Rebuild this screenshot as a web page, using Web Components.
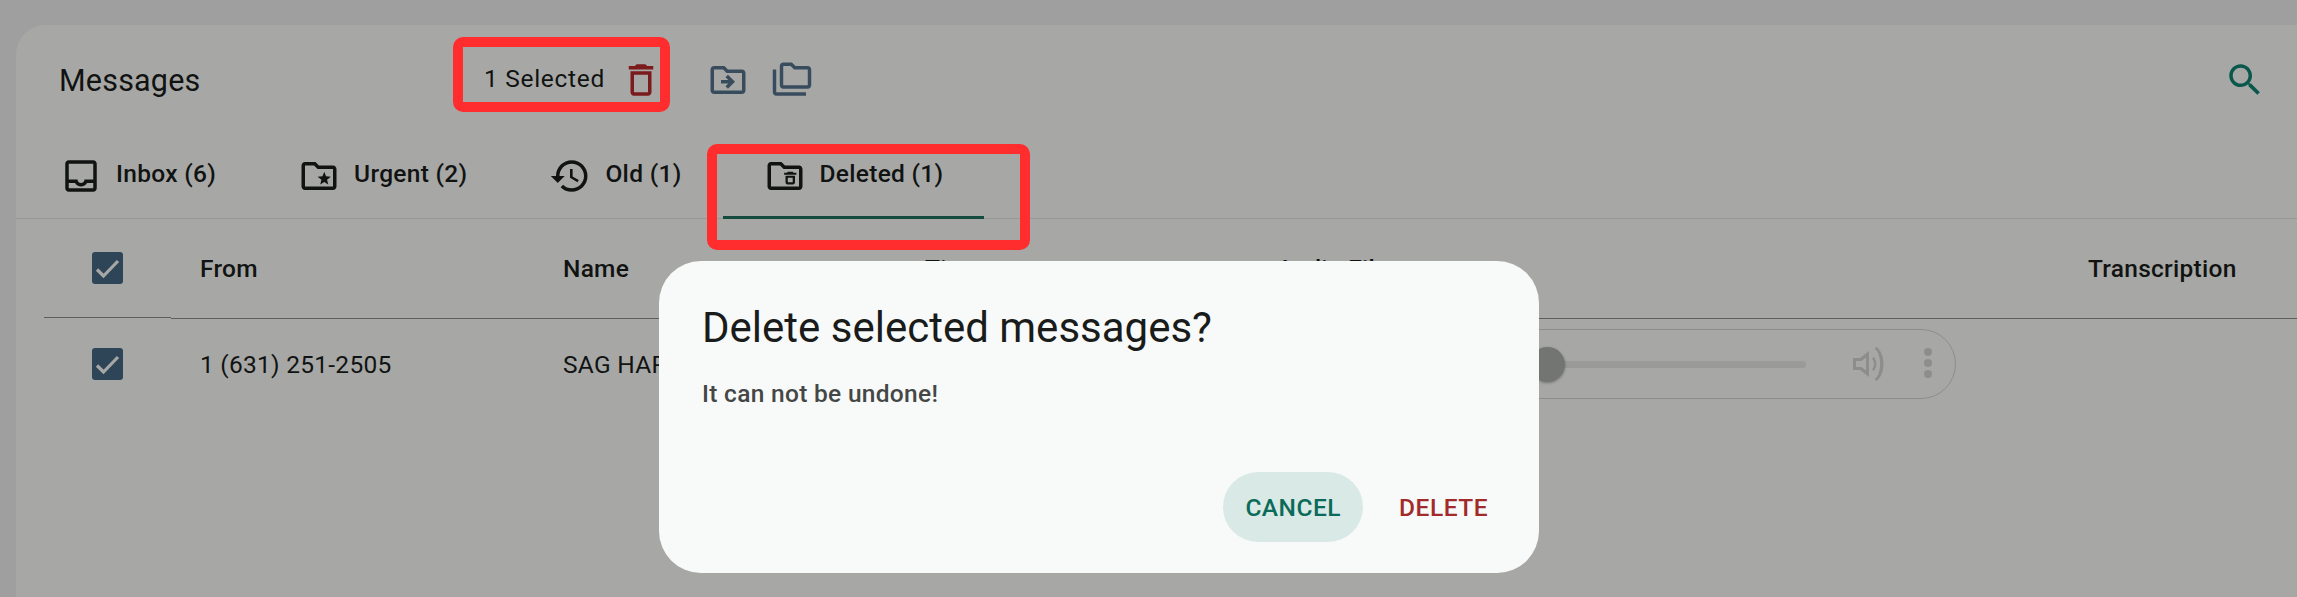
<!DOCTYPE html>
<html lang="en">
<head>
<meta charset="utf-8">
<title>Messages</title>
<style>
  html, body { margin: 0; height: 100%; }
  body {
    background: #ebebeb;
    font-family: Roboto, "Liberation Sans", sans-serif;
    color: #1a1c1b;
    overflow: hidden;
  }
</style>
</head>
<body>
  <message-card>
    <message-toolbar title="Messages" selected="1 Selected"></message-toolbar>
    <message-tabs>
      <message-tab icon="inbox">Inbox (6)</message-tab>
      <message-tab icon="urgent">Urgent (2)</message-tab>
      <message-tab icon="history">Old (1)</message-tab>
      <message-tab icon="deleted" active>Deleted (1)</message-tab>
    </message-tabs>
    <message-table></message-table>
  </message-card>

  <confirm-dialog title="Delete selected messages?" text="It can not be undone!"></confirm-dialog>

  <mark-box style="left:453px;top:37px;width:217px;height:75px"></mark-box>
  <mark-box style="left:707px;top:144px;width:323px;height:106px"></mark-box>

<script>
// material outlined icons, all on a 24 grid
const ICONS = {
  inbox: 'M19 3H5c-1.1 0-2 .9-2 2v14c0 1.1.9 2 2 2h14c1.1 0 2-.9 2-2V5c0-1.1-.9-2-2-2zm0 16H5v-3h3.56c.69 1.19 1.97 2 3.45 2s2.75-.81 3.45-2H19v3zm0-5h-4.99c0 1.1-.9 2-2 2s-2-.9-2-2H5V5h14v9z',
  urgent: 'M20 6h-8l-2-2H4c-1.1 0-1.99.9-1.99 2L2 18c0 1.1.9 2 2 2h16c1.1 0 2-.9 2-2V8c0-1.1-.9-2-2-2zm0 12H4V6h5.17l2 2H20v10zM15 9.6l1 2.6 2.8.2-2.2 1.8.7 2.7-2.3-1.5-2.3 1.5.7-2.7-2.2-1.8 2.8-.2z',
  history: 'M13 3c-4.97 0-9 4.03-9 9H1l3.89 3.89.07.14L9 12H6c0-3.87 3.13-7 7-7s7 3.13 7 7-3.13 7-7 7c-1.93 0-3.68-.79-4.94-2.06l-1.42 1.42C8.27 19.99 10.51 21 13 21c4.97 0 9-4.03 9-9s-4.03-9-9-9zm-1 5v5l4.28 2.54.72-1.21-3.5-2.08V8H12z',
  deleted: 'M20 6h-8l-2-2H4c-1.1 0-1.99.9-1.99 2L2 18c0 1.1.9 2 2 2h16c1.1 0 2-.9 2-2V8c0-1.1-.9-2-2-2zm0 12H4V6h5.17l2 2H20v10zM13.6 9.5h2.8l.5.6H18.500v1.200h-7V10.100h1.600zM12.300 11.800h5.400v3.900c0 .6-.5 1.100-1.100 1.100h-3.200c-.6 0-1.100-.5-1.100-1.100zm1.300 1.200v2.600h2.800V13z',
  trash: 'M16 9v10H8V9h8m-1.500-6h-5l-1 1H5v2h14V4h-3.500l-1-1zM18 7H6v12c0 1.100.9 2 2 2h8c1.100 0 2-.9 2-2V7z',
  move: 'M20 6h-8l-2-2H4c-1.100 0-1.990.9-1.990 2L2 18c0 1.100.9 2 2 2h16c1.100 0 2-.9 2-2V8c0-1.100-.9-2-2-2zm0 12H4V6h5.170l2 2H20v10zm-8.010-9l-1.410 1.410L12.160 12H8v2h4.160l-1.590 1.590L11.990 17 16 13.010 11.990 9z',
  copy: 'M3 19h17v2H3c-1.100 0-2-.9-2-2V6h2v13zM23 6v9c0 1.100-.9 2-2 2H7c-1.100 0-2-.9-2-2l.01-11c0-1.100.89-2 1.990-2h5l2 2h7c1.100 0 2 .9 2 2zM7 15h14V6h-7.830l-2-2H7v11z',
  search: 'M15.500 14h-.79l-.28-.27C15.410 12.590 16 11.110 16 9.500 16 5.910 13.090 3 9.500 3S3 5.910 3 9.500 5.910 16 9.500 16c1.610 0 3.090-.59 4.230-1.570l.27.28v.79l5 4.990L20.490 19l-4.990-5zm-6 0C7.010 14 5 11.990 5 9.500S7.010 5 9.500 5 14 7.010 14 9.500 11.990 14 9.500 14z'
}

class AppIcon extends HTMLElement {
  constructor() {
    super();
    this.attachShadow({ mode: 'open' });
    const name = this.getAttribute('name');
    this.shadowRoot.innerHTML = `
      <style>
        :host { display: block; width: 42px; height: 42px; flex: none; }
        svg { display: block; width: 100%; height: 100%; fill: currentColor; }
      </style>
      <svg viewBox="0 0 24 24"><path d="${ICONS[name]}"></path></svg>
    `;
  }
}

class MessageCard extends HTMLElement {
  constructor() {
    super();
    this.attachShadow({ mode: 'open' });
    this.shadowRoot.innerHTML = `
      <style>
        :host {
          display: block;
          height: 572px;
          margin: 25px 0 0 16px;
          background: #f6f8f4;
          border-radius: 30px 0 0 0;
        }
      </style>
      <slot></slot>
    `;
  }
}

class MessageToolbar extends HTMLElement {
  constructor() {
    super();
    this.attachShadow({ mode: 'open' });
    this.shadowRoot.innerHTML = `
      <style>
        :host {
          display: flex;
          align-items: center;
          height: 110px;
          padding-left: 43px;
          padding-right: 31px;
        }
        .title { width: 425px; flex: none; font-size: 30.500px; letter-spacing: .2px; color: #1a1c1b; }
        .selected { width: 136px; flex: none; font-size: 24.500px; letter-spacing: .7px; color: #1a1c1b; margin-top: -4px; }
        .trash { color: #b52828; margin-right: 45px; }
        .move { color: #55708a; margin-right: 22px; }
        .copy { color: #55708a; }
        .search { color: #0f8070; margin-left: auto; }
      </style>
      <div class="title">${this.getAttribute('title')}</div>
      <div class="selected">${this.getAttribute('selected')}</div>
      <app-icon class="trash" name="trash"></app-icon>
      <app-icon class="move" name="move"></app-icon>
      <app-icon class="copy" name="copy"></app-icon>
      <app-icon class="search" name="search"></app-icon>
    `;
  }
}

class MessageTabs extends HTMLElement {
  constructor() {
    super();
    this.attachShadow({ mode: 'open' });
    this.shadowRoot.innerHTML = `
      <style>
        :host {
          display: flex;
          height: 84px;
          box-sizing: border-box;
          padding-left: 3px;
          border-bottom: 1px solid #dfe1de;
        }
      </style>
      <slot></slot>
    `;
  }
}

class MessageTab extends HTMLElement {
  constructor() {
    super();
    this.attachShadow({ mode: 'open' });
    this.shadowRoot.innerHTML = `
      <style>
        :host {
          display: flex;
          align-items: center;
          gap: 14px;
          height: 84px;
          box-sizing: border-box;
          padding: 0 41px 3px;
          font-size: 24.500px;
          font-weight: 500;
          letter-spacing: .3px;
          color: #1a1c1b;
        }
        :host([active]) { border-bottom: 3px solid #1f6d5e; padding-bottom: 0; }
        :host([active]) span, span { margin-top: -4px; }
      </style>
      <app-icon name="${this.getAttribute('icon')}"></app-icon>
      <span><slot></slot></span>
    `;
  }
}

class MessageTable extends HTMLElement {
  constructor() {
    super();
    this.attachShadow({ mode: 'open' });
    this.shadowRoot.innerHTML = `
      <style>
        :host {
          display: grid;
          grid-template-columns: 127px 363px 362px 352px 811px 1fr;
          margin-left: 28px;
          font-size: 24.500px;
          letter-spacing: .26px;
          color: #1a1c1b;
        }
        .head, .cell { display: flex; align-items: center; padding-left: 29px; min-width: 0; }
        .head {
          height: 99px;
          font-weight: 500;
          border-bottom: 1px solid #8a8c8a;
          box-sizing: content-box;
        }
        .cell { height: 90px; }
        .check { justify-content: center; padding-left: 0; }
        .head.check { height: 98px; margin-bottom: 1px; }
        .wide { white-space: nowrap; }
      </style>
      <div class="head check"><check-box></check-box></div>
      <div class="head">From</div>
      <div class="head">Name</div>
      <div class="head">Time</div>
      <div class="head">Audio File</div>
      <div class="head">Transcription</div>

      <div class="cell check"><check-box></check-box></div>
      <div class="cell">1 (631) 251-2505</div>
      <div class="cell wide">SAG HARBOR</div>
      <div class="cell"></div>
      <div class="cell"><audio-bar></audio-bar></div>
      <div class="cell"></div>
    `;
  }
}

class CheckBox extends HTMLElement {
  constructor() {
    super();
    this.attachShadow({ mode: 'open' });
    this.shadowRoot.innerHTML = `
      <style>
        :host { display: block; width: 31px; height: 32px; background: #456681; border-radius: 3px; }
        svg { display: block; width: 100%; height: 100%; }
      </style>
      <svg viewBox="0 0 31 32"><path d="M5 17.500l6.500 6.500L26 9" fill="none" stroke="#f6f8f4" stroke-width="3.200"></path></svg>
    `;
  }
}

class AudioBar extends HTMLElement {
  constructor() {
    super();
    this.attachShadow({ mode: 'open' });
    this.shadowRoot.innerHTML = `
      <style>
        :host {
          display: flex;
          align-items: center;
          width: 708px;
          height: 70px;
          margin-left: -29px;
          box-sizing: border-box;
          border: 1px solid #cfd1ce;
          border-radius: 35px;
          color: #d0d2cf;
          padding-right: 22px;
        }
        .slider { position: relative; width: 259px; height: 7px; margin-left: auto; margin-right: 42px; background: #e3e5e1; border-radius: 3px; }
        .thumb {
          position: absolute; left: -17px; top: -14px;
          width: 35px; height: 35px; border-radius: 50%;
          background: #aaadaa;
          box-shadow: 0 1px 3px rgba(0,0,0,.3);
        }
        svg { display: block; flex: none; fill: currentColor; }
        .vol { width: 42px; height: 42px; margin-right: 33px; }
        .dots { width: 10px; height: 34px; }
      </style>
      <div class="slider"><div class="thumb"></div></div>
      <svg class="vol" viewBox="0 0 42 42">
        <path d="M5 15h7l9-7v26l-9-7H5zM8 18v6h5.500l4.500 3.500v-13L13.500 18z"></path>
        <path d="M24 15.500c2.600 2.700 2.600 8.300 0 11l1.800 1.500c3.500-3.500 3.500-10.500 0-14z"></path>
        <path d="M26.500 5.500c7.500 6 7.500 25 0 31l2.300 1.500c9-7 9-27 0-34z"></path>
      </svg>
      <svg class="dots" viewBox="0 0 10 34">
        <circle cx="5" cy="5" r="4"></circle>
        <circle cx="5" cy="16" r="4"></circle>
        <circle cx="5" cy="27" r="4"></circle>
      </svg>
    `;
  }
}

class ConfirmDialog extends HTMLElement {
  constructor() {
    super();
    this.attachShadow({ mode: 'open' });
    this.shadowRoot.innerHTML = `
      <style>
        :host {
          position: fixed;
          inset: 0;
          background: rgba(0, 0, 0, .32);
          z-index: 10;
        }
        .panel {
          position: absolute;
          left: 659px;
          top: 261px;
          width: 880px;
          height: 312px;
          box-sizing: border-box;
          padding: 43px 29px 31px 43px;
          display: flex;
          flex-direction: column;
          background: #f8faf9;
          border-radius: 42px;
        }
        h2 { margin: 0; font-size: 42px; line-height: 48px; font-weight: 400; color: #1a1c1b; }
        p { margin: 24px 0 0; font-size: 24.500px; line-height: 36px; font-weight: 500; letter-spacing: .3px; color: #444746; }
        .actions { margin-top: auto; display: flex; justify-content: flex-end; gap: 14px; }
        button {
          height: 70px; padding: 0 22px; border: 0; border-radius: 35px;
          background: none; font: 500 24.500px Roboto, "Liberation Sans", sans-serif; letter-spacing: .5px;
        }
        .cancel { background: #d9e9e5; color: #0b6b5a; }
        .ok { color: #a32a2a; }
      </style>
      <div class="panel">
        <h2>${this.getAttribute('title')}</h2>
        <p>${this.getAttribute('text')}</p>
        <div class="actions">
          <button class="cancel">CANCEL</button>
          <button class="ok">DELETE</button>
        </div>
      </div>
    `;
  }
}

// red rectangles drawn on the screenshot
class MarkBox extends HTMLElement {
  constructor() {
    super();
    this.attachShadow({ mode: 'open' });
    this.shadowRoot.innerHTML = `
      <style>
        :host {
          position: fixed;
          box-sizing: border-box;
          border: 10px solid #ff2d2d;
          border-radius: 10px;
          z-index: 20;
        }
      </style>
    `;
  }
}

window.customElements.define('app-icon', AppIcon);
window.customElements.define('message-card', MessageCard);
window.customElements.define('message-toolbar', MessageToolbar);
window.customElements.define('message-tabs', MessageTabs);
window.customElements.define('message-tab', MessageTab);
window.customElements.define('message-table', MessageTable);
window.customElements.define('check-box', CheckBox);
window.customElements.define('audio-bar', AudioBar);
window.customElements.define('confirm-dialog', ConfirmDialog);
window.customElements.define('mark-box', MarkBox);
</script>
</body>
</html>
